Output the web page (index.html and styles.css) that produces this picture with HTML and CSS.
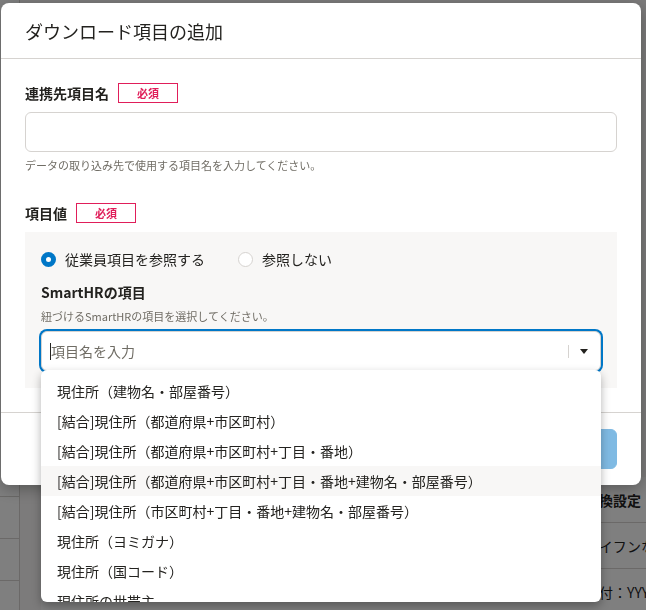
FILE: index.html
```html
<!DOCTYPE html>
<html lang="ja">
<head>
  <meta charset="UTF-8">
  <meta name="viewport" content="width=device-width, initial-scale=1.0">
  <title>ダウンロード項目の追加</title>
  <link rel="stylesheet" href="styles.css">
</head>
<body>
  <div class="page">
    <aside class="side">
      <div class="side-row"></div>
      <div class="side-row"></div>
      <div class="side-row"></div>
      <div class="side-row"></div>
    </aside>
    <main class="main">
      <div class="table">
        <div class="tr th"><div class="td"></div><div class="td">変換設定</div></div>
        <div class="tr"><div class="td"></div><div class="td">ハイフンなし</div></div>
        <div class="tr"><div class="td"></div><div class="td">日付：YYYY/MM/DD</div></div>
      </div>
    </main>
  </div>

  <div class="overlay"></div>

  <div class="dialog">
    <div class="dialog-head">
      <h2 class="dialog-title">ダウンロード項目の追加</h2>
    </div>

    <div class="dialog-body">
      <div class="field">
        <div class="label-row">
          <span class="label">連携先項目名</span>
          <span class="badge">必須</span>
        </div>
        <div class="text-input"></div>
        <p class="help">データの取り込み先で使用する項目名を入力してください。</p>
      </div>

      <div class="field">
        <div class="label-row">
          <span class="label">項目値</span>
          <span class="badge">必須</span>
        </div>
        <div class="panel">
          <div class="radios">
            <label class="radio"><span class="radio-mark on"></span>従業員項目を参照する</label>
            <label class="radio"><span class="radio-mark"></span>参照しない</label>
          </div>
          <div class="sub-label">SmartHRの項目</div>
          <p class="help help-sm">紐づけるSmartHRの項目を選択してください。</p>

          <div class="combo">
            <div class="combo-input"><span class="caret"></span>項目名を入力</div>
            <span class="combo-sep"></span>
            <svg class="combo-arrow" width="8" height="5" viewBox="0 0 8 5"><path d="M0 0h8L4 5z" fill="#23221f"/></svg>

            <ul class="dropdown">
              <li class="option">現住所（建物名・部屋番号）</li>
              <li class="option">[結合]現住所（都道府県+市区町村）</li>
              <li class="option">[結合]現住所（都道府県+市区町村+丁目・番地）</li>
              <li class="option active">[結合]現住所（都道府県+市区町村+丁目・番地+建物名・部屋番号）</li>
              <li class="option">[結合]現住所（市区町村+丁目・番地+建物名・部屋番号）</li>
              <li class="option">現住所（ヨミガナ）</li>
              <li class="option">現住所（国コード）</li>
              <li class="option">現住所の世帯主</li>
            </ul>
          </div>
        </div>
      </div>
    </div>

    <div class="dialog-foot">
      <button class="btn">キャンセル</button>
      <button class="btn btn-primary" disabled>追加</button>
    </div>
  </div>
</body>
</html>
```

FILE: styles.css
```css
body {
  margin: 0;
  width: 646px;
  height: 610px;
  overflow: hidden;
  font-family: "Noto Sans CJK JP", "Noto Sans", sans-serif;
  color: #23221f;
  background-color: #fff;
}

/* ページ（背景） */
.page {
  display: flex;
  height: 610px;
}

.side {
  width: 19px;
  padding-top: 455px;
  border-right: 1px solid #d6d3d0;
  background-color: #fff;
}

.side-row {
  height: 41px;
  border-bottom: 1px solid #d6d3d0;
}

.main {
  flex: 1;
  min-width: 0;
  overflow: hidden;
  padding: 477px 0 0 21px;
  background-color: #f8f7f6;
}

.table {
  width: 700px;
  background-color: #fff;
}

.tr {
  display: grid;
  grid-template-columns: 532px 1fr;
  height: 46px;
  box-sizing: border-box;
  border-bottom: 1px solid #d6d3d0;
  align-items: center;
  font-size: 14px;
  white-space: nowrap;
}

.tr.th {
  font-weight: bold;
}

.td {
  padding: 0 12px;
}

.overlay {
  position: fixed;
  inset: 0;
  background-color: rgba(0, 0, 0, 0.5);
}

/* ダイアログ */
.dialog {
  position: fixed;
  left: 1px;
  top: 3px;
  width: 640px;
  background-color: #fff;
  border-radius: 8px;
  box-shadow: 0 4px 16px rgba(0, 0, 0, 0.3);
}

.dialog-head {
  height: 55px;
  padding: 0 24px;
  display: flex;
  align-items: center;
  border-bottom: 1px solid #d6d3d0;
}

.dialog-title {
  margin: 0;
  font-size: 18px;
  font-weight: normal;
  line-height: 1;
}

.dialog-body {
  padding: 24px;
}

.field + .field {
  margin-top: 30px;
}

.label-row {
  display: flex;
  align-items: center;
  gap: 9px;
  height: 20px;
}

.label {
  font-size: 14px;
  font-weight: bold;
  line-height: 20px;
}

.badge {
  box-sizing: border-box;
  width: 60px;
  height: 20px;
  border: 1px solid #e01e5a;
  color: #e01e5a;
  font-size: 11px;
  font-weight: bold;
  display: flex;
  align-items: center;
  justify-content: center;
}

.text-input {
  box-sizing: border-box;
  height: 40px;
  margin-top: 9px;
  border: 1px solid #d6d3d0;
  border-radius: 6px;
  background-color: #fff;
}

.help {
  margin: 5px 0 0;
  font-size: 11px;
  line-height: 16px;
  color: #706d65;
}

.panel {
  margin-top: 9px;
  padding: 16px 16px 17px;
  background-color: #f8f7f6;
}

.radios {
  display: flex;
  gap: 33px;
  height: 22px;
  align-items: center;
}

.radio {
  display: flex;
  align-items: center;
  gap: 9px;
  font-size: 14px;
  line-height: 22px;
}

.radio-mark {
  box-sizing: border-box;
  width: 15px;
  height: 15px;
  border-radius: 50%;
  border: 1px solid #d6d3d0;
  background-color: #fff;
}

.radio-mark.on {
  border: 5px solid #0077c7;
}

.sub-label {
  margin-top: 12px;
  font-size: 14px;
  font-weight: bold;
  line-height: 20px;
}

.help-sm {
  margin-top: 6px;
}

/* コンボボックス */
.combo {
  position: relative;
  margin-top: 7px;
  height: 40px;
  box-sizing: border-box;
  padding: 0 12px 0 8px;
  display: flex;
  align-items: center;
  border: 1px solid #d6d3d0;
  border-radius: 6px;
  background-color: #fff;
  box-shadow: 0 0 0 2px #0077c7;
}

.combo-input {
  flex: 1;
  display: flex;
  align-items: center;
  font-size: 14px;
  color: #706d65;
}

.caret {
  width: 1px;
  height: 17px;
  background-color: #23221f;
}

.combo-sep {
  width: 1px;
  height: 13px;
  background-color: #d6d3d0;
}

.combo-arrow {
  margin-left: 11px;
}

.dropdown {
  position: absolute;
  left: -1px;
  top: 38px;
  z-index: 2;
  width: 560px;
  height: 232px;
  box-sizing: border-box;
  margin: 0;
  padding: 6px 0 0;
  list-style: none;
  overflow: hidden;
  background-color: #fff;
  border-radius: 6px;
  box-shadow: 0 4px 10px rgba(0, 0, 0, 0.3);
}

.option {
  height: 30px;
  line-height: 30px;
  padding: 0 16px;
  font-size: 14px;
  color: #23221f;
  white-space: nowrap;
}

.option.active {
  background-color: #f8f7f6;
}

/* フッター */
.dialog-foot {
  display: flex;
  justify-content: flex-end;
  gap: 16px;
  padding: 16px 24px;
  border-top: 1px solid #d6d3d0;
}

.btn {
  height: 40px;
  padding: 0 16px;
  border: 1px solid #d6d3d0;
  border-radius: 6px;
  background-color: #fff;
  font-family: inherit;
  font-size: 14px;
  font-weight: bold;
  color: #23221f;
}

.btn-primary {
  border-color: #0077c7;
  background-color: #0077c7;
  color: #fff;
  opacity: 0.5;
}
```
